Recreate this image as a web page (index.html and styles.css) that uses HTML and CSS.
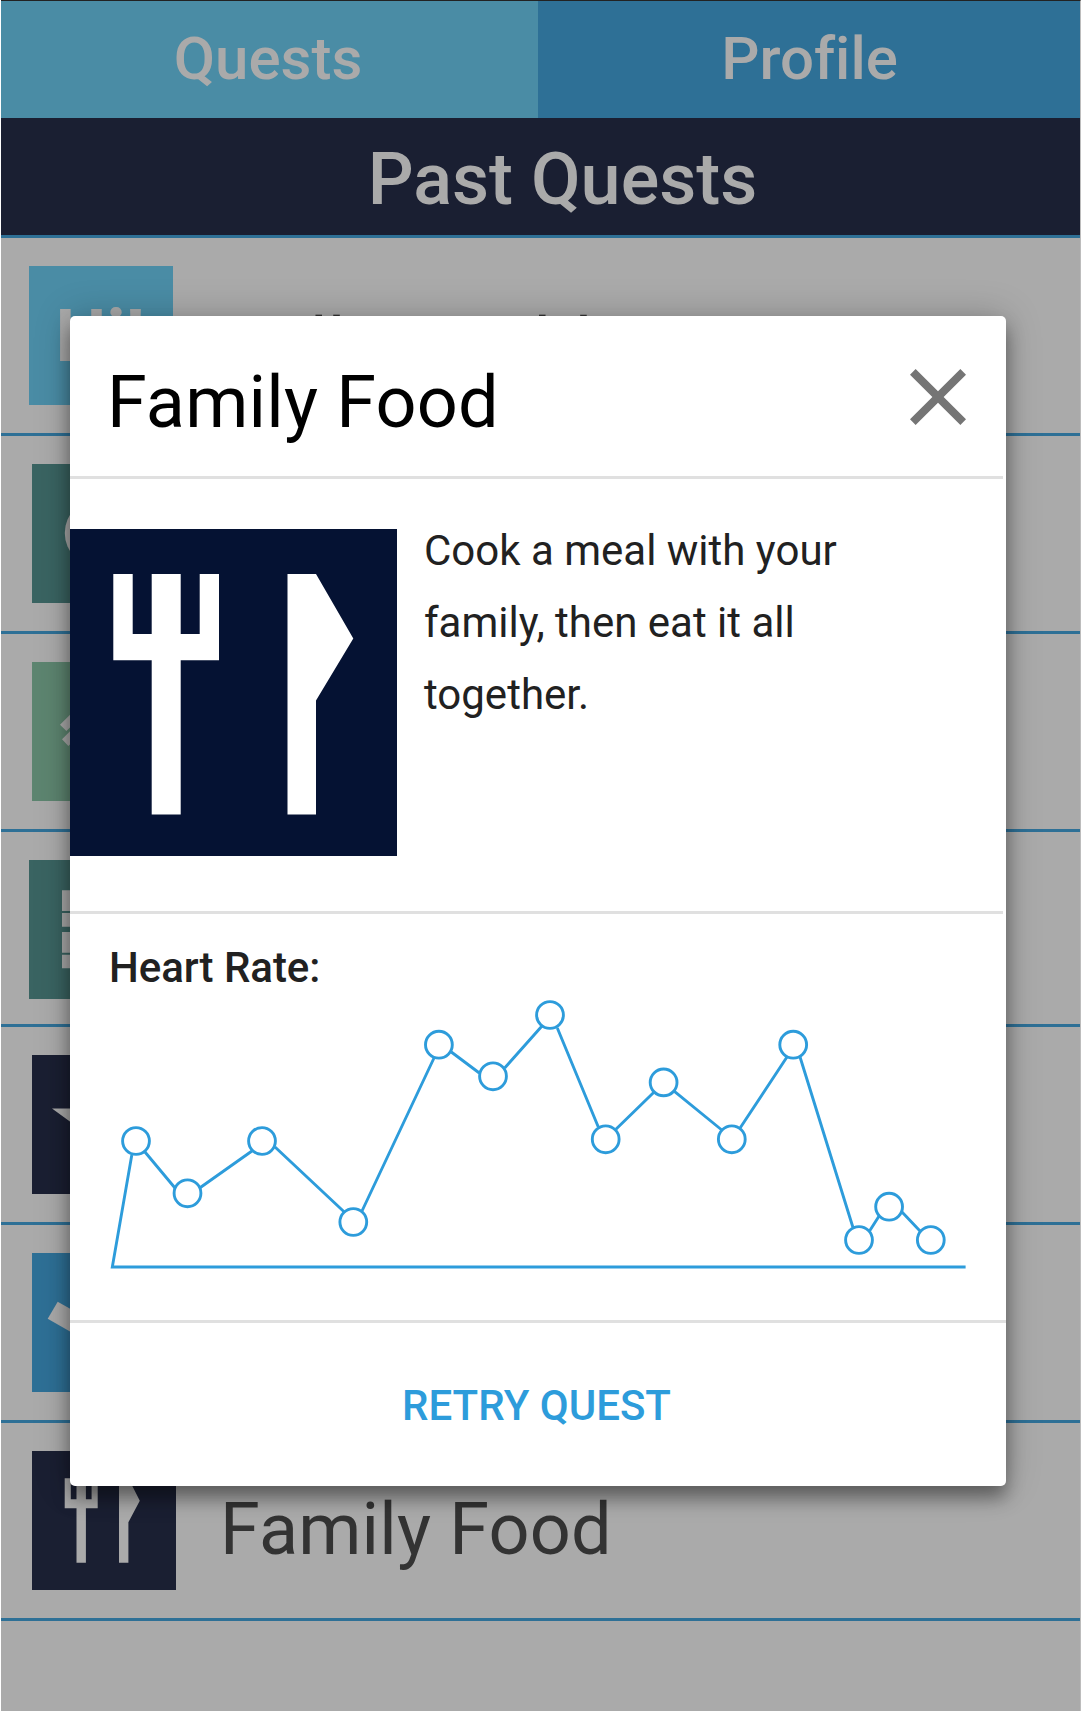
FILE: index.html
```html
<!DOCTYPE html>
<html lang="en">
<head>
<meta charset="utf-8">
<title>Past Quests</title>
<link rel="stylesheet" href="styles.css">
</head>
<body>
<div class="screen">
  <nav class="tabs">
    <a class="tab tab-quests">Quests</a>
    <a class="tab tab-profile">Profile</a>
  </nav>
  <header class="page-header"><h1>Past Quests</h1></header>
  <ul class="quests">
    <li class="quest shifted">
      <div class="tile sky"><span class="hi">Hi!</span></div>
      <span class="quest-name">Hello World</span>
    </li>
    <li class="quest">
      <svg class="tile teal" viewBox="0 0 144 138.5"><circle cx="67.5" cy="69" r="34.7"/></svg>
    </li>
    <li class="quest">
      <svg class="tile green" viewBox="0 0 144 138.5"><path d="M28 62.7L68 23l6.4 6.4L34.4 69zM30 77.3L78 29.5l6.4 6.5L36.4 84z"/></svg>
    </li>
    <li class="quest shifted short">
      <svg class="tile teal" viewBox="0 0 144 138.5"><path d="M33 30.3h78v20.7H33zM33 53h78v13.7H33zM33 72h78v20.7H33zM33 94.7h78v13.6H33z"/></svg>
    </li>
    <li class="quest">
      <svg class="tile navy" viewBox="0 0 144 138.5"><path d="M20 53.5H60L72.3 15.4 84.6 53.5H124.6L92.3 77 104.6 115 72.3 91.6 40 115 52.3 77z"/></svg>
    </li>
    <li class="quest">
      <svg class="tile blue" viewBox="0 0 144 138.5"><path d="M15.7 65.7L25.7 48.7 76 77 66 94.5z"/></svg>
    </li>
    <li class="quest">
      <svg class="tile navy" viewBox="0 0 144 138.5"><path d="M32.7 27.3h6.1v21h5.7v-21h9.4v21h5.7v-21h6.1v30H53.9v54.4h-9.4V57.3H32.7zM87 27.3h9.4L107.8 49.7 96.4 71.3v40.4H87z"/></svg>
      <span class="quest-name">Family Food</span>
    </li>
  </ul>
</div>

<section class="dialog" role="dialog">
  <header class="dialog-header">
    <h2>Family Food</h2>
    <svg class="close" viewBox="0 0 24 24"><path d="M19 6.41L17.59 5 12 10.59 6.41 5 5 6.41 10.59 12 5 17.59 6.41 19 12 13.41 17.59 19 19 17.59 13.41 12z"/></svg>
  </header>
  <div class="summary">
    <svg class="quest-icon" viewBox="0 0 327 327.5"><path d="M43.3 45h19.4v60h19V45h29v60h19V45H149v86.200h-38.300V285.500h-29V131.200H43.300zM217.500 45H246L283.300 109.500 246 171.500v114h-28.500z"/></svg>
    <p>Cook a meal with your family, then eat it all together.</p>
  </div>
  <div class="heart-rate">
    <h3>Heart Rate:</h3>
    <svg class="chart" viewBox="105 996 870 280">
      <path d="M965.600 1267H112.300L131.800 1155M145 1152L175 1188M200 1187.700L252.300 1150.700M275 1147L344.300 1212M362 1211L434 1058M451.300 1052L479.300 1073M504.700 1068L542 1026M557.300 1028L598.300 1127M615.900 1129.300L653.900 1092.300M674.400 1091.300L721.800 1130M740.100 1128L786.800 1057.300M800.100 1057.300L852.900 1227.300M869.700 1230.700L879.100 1216M902 1212L920 1231"/>
      <circle cx="136" cy="1141" r="13.4"/>
      <circle cx="187.500" cy="1193.300" r="13.4"/>
      <circle cx="262" cy="1141" r="13.4"/>
      <circle cx="353.300" cy="1222" r="13.4"/>
      <circle cx="438.900" cy="1044.700" r="13.4"/>
      <circle cx="493" cy="1076.300" r="13.4"/>
      <circle cx="550" cy="1015" r="13.4"/>
      <circle cx="605.700" cy="1139.300" r="13.4"/>
      <circle cx="663.600" cy="1082.400" r="13.4"/>
      <circle cx="731.800" cy="1139.300" r="13.4"/>
      <circle cx="793.200" cy="1044.700" r="13.4"/>
      <circle cx="859" cy="1240" r="13.4"/>
      <circle cx="889.100" cy="1206.700" r="13.4"/>
      <circle cx="930.800" cy="1240" r="13.4"/>
    </svg>
  </div>
  <button class="retry">RETRY QUEST</button>
</section>
</body>
</html>
```

FILE: styles.css
```css
* {
  box-sizing: border-box;
}

body {
  margin: 0;
  background: #fff;
  font-family: Roboto, sans-serif;
  font-variant-ligatures: none;
}

h1,
h2,
h3,
p,
ul {
  margin: 0;
  padding: 0;
}

/* Dimmed page behind the dialog */
.screen {
  width: 1080px;
  height: 1711px;
  margin-left: 1px;
  background: #aaa;
  border-top: 1px solid #222;
  border-right: 1px solid #bcbcbc;
  overflow: hidden;
}

.tabs {
  display: flex;
  height: 117px;
}

.tab {
  display: flex;
  align-items: center;
  justify-content: center;
  padding-bottom: 2px;
  color: #aaa;
  font-size: 60px;
  font-weight: 500;
}

.tab-quests {
  width: 537px;
  padding-right: 3px;
  background: #4a8ca5;
}

.tab-profile {
  flex: 1;
  padding-left: 1px;
  background: #2e7096;
}

.page-header {
  height: 120px;
  padding: 20px 0 0 44px;
  background: #1a1f32;
  border-bottom: 3px solid #2e7096;
  text-align: center;
}

.page-header h1 {
  color: #aaa;
  font-size: 72px;
  font-weight: 500;
  line-height: 84px;
}

.quests {
  list-style: none;
}

.quest {
  display: flex;
  gap: 44.500px;
  height: 198px;
  padding: 28px 0 0 30.600px;
  border-bottom: 3px solid #2e7096;
}

.quest.shifted {
  gap: 47.500px;
  padding-left: 27.600px;
}

.quest.short {
  height: 195px;
}

.tile {
  flex: none;
  width: 144px;
  height: 138.5px;
  fill: #aaa;
}

.sky { background: #4a8ca5; }
.teal { background: #3a6462; }
.green { background: #5d8570; }
.navy { background: #1a1f32; }
.blue { background: #2e7096; }

.hi {
  display: block;
  padding: 29px 0 0 27px;
  color: #aaa;
  font-size: 72px;
  font-weight: 700;
  line-height: 84px;
}

.quest-name {
  padding-top: 37px;
  color: #333;
  font-size: 72px;
  letter-spacing: .2px;
  line-height: 84px;
}

/* Dialog */
.dialog {
  position: absolute;
  top: 315.500px;
  left: 70px;
  width: 935.700px;
  height: 1170px;
  background: #fff;
  border-radius: 5px;
  box-shadow: 0 0 36px rgba(0, 0, 0, .22), 0 12px 18px rgba(0, 0, 0, .38);
}

.dialog-header {
  display: flex;
  justify-content: space-between;
  width: 933px;
  height: 163px;
  padding: 45.500px 16.800px 0 37px;
  border-bottom: 3px solid #e0e0e0;
}

.dialog-header h2 {
  color: #000;
  font-size: 72px;
  font-weight: 400;
  letter-spacing: .2px;
  line-height: 84px;
}

.close {
  width: 96px;
  height: 96px;
  margin-top: -12px;
  fill: #757575;
}

.summary {
  display: flex;
  gap: 27px;
  width: 933px;
  height: 435px;
  padding-top: 50px;
  border-bottom: 3px solid #e0e0e0;
}

.quest-icon {
  flex: none;
  width: 327px;
  height: 327.500px;
  background: #051233;
  fill: #fff;
}

.summary p {
  width: 450px;
  margin-top: -14px;
  color: #212121;
  font-size: 42px;
  line-height: 72px;
}

.heart-rate {
  height: 409px;
  padding: 29px 0 0 35px;
  border-bottom: 3px solid #e0e0e0;
}

.heart-rate h3 {
  height: 53.500px;
  padding-left: 4px;
  color: #212121;
  font-size: 42px;
  font-weight: 500;
  letter-spacing: -.05px;
  line-height: 50px;
}

.chart {
  display: block;
  width: 870px;
  height: 280px;
  fill: #fff;
  stroke: #2d9cdb;
  stroke-width: 2.900;
}

.retry {
  display: block;
  width: 933px;
  height: 163px;
  padding: 2px 0 0;
  background: none;
  border: 0;
  color: #2d9cdb;
  font: 500 42px Roboto, sans-serif;
}
```
